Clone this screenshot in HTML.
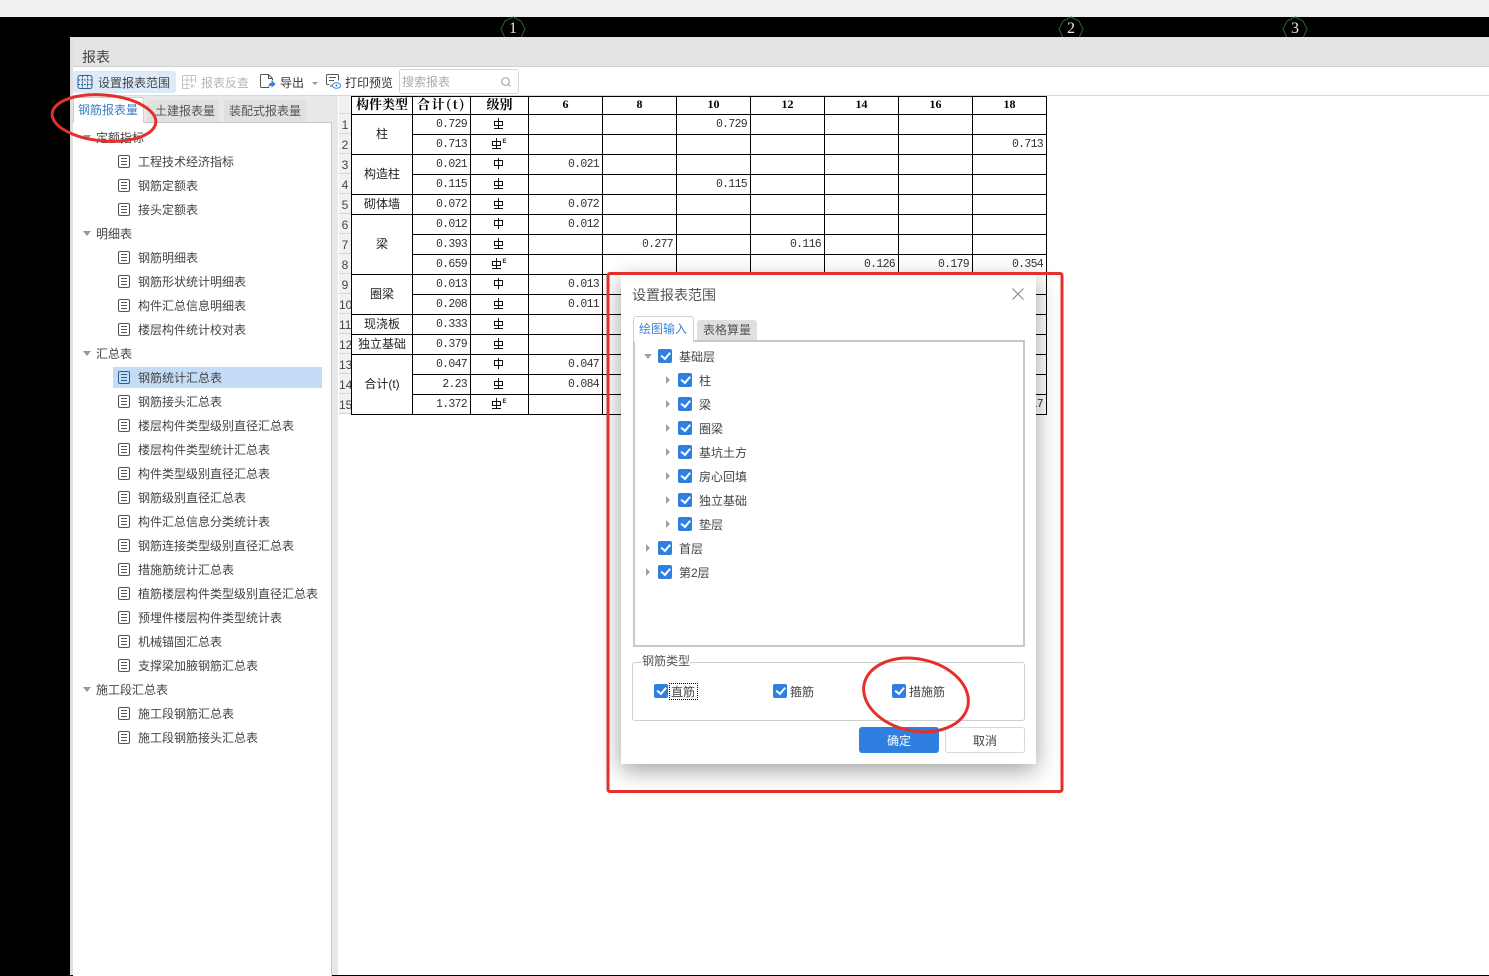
<!DOCTYPE html>
<html lang="zh">
<head>
<meta charset="utf-8">
<title>报表</title>
<style>
html,body{margin:0;padding:0}
body{width:1489px;height:975px;position:relative;overflow:hidden;background:#000;font-family:"Liberation Sans","Noto Sans CJK SC",sans-serif;font-size:12px;color:#444}
.a{position:absolute}
.t{position:absolute;white-space:nowrap;line-height:16px;margin-top:1px}
/* left tree */
#tree{position:absolute;left:73px;top:125px;width:258px}
.g,.i{height:24px;line-height:26px;position:relative;white-space:nowrap}
.g{padding-left:23px}
.g::before{content:"";position:absolute;left:10px;top:10px;border-left:4px solid transparent;border-right:4px solid transparent;border-top:5px solid #999}
.i{padding-left:65px}
.i::after{content:"";position:absolute;left:45px;top:6px;width:10px;height:11px;border:1px solid #555;border-radius:2px;background:linear-gradient(#555,#555) 2px 2px/6px 1px no-repeat,linear-gradient(#555,#555) 2px 5px/6px 1px no-repeat,linear-gradient(#555,#555) 2px 8px/6px 1px no-repeat}
.i span{position:relative;z-index:1}
.sel::before{content:"";position:absolute;left:40px;top:2px;width:209px;height:21px;background:#c5dcf7}
.sel::after{border-color:#2a5f96;background:linear-gradient(#2a5f96,#2a5f96) 2px 2px/6px 1px no-repeat,linear-gradient(#2a5f96,#2a5f96) 2px 5px/6px 1px no-repeat,linear-gradient(#2a5f96,#2a5f96) 2px 8px/6px 1px no-repeat;z-index:1}
/* table */
#tb{position:absolute;left:351px;top:96px;border-collapse:collapse;table-layout:fixed;background:#fff;color:#222}
#tb td{border:1px solid #000;padding:0;height:19px;box-sizing:content-box;line-height:14px;white-space:nowrap;overflow:hidden}
#tb tr.h td{height:17px;text-align:center;vertical-align:top;font:bold 12px/14px "Liberation Serif","Noto Serif CJK SC",serif;color:#000}
#tb tr.h td.c{font:bold 13px/14px "Noto Serif CJK SC","Liberation Serif",serif}
#tb td.n{text-align:right;padding-right:3px;font:11.5px/14px "Liberation Mono",monospace;letter-spacing:-.7px;vertical-align:top;padding-top:3px;height:16px;color:#333}
#tb td.m{text-align:center;font-size:12px;padding-bottom:2px;height:17px}
#tb td.s{text-align:center;line-height:14px;height:19px;padding:0}
.sup{font:bold 6px "Liberation Sans",sans-serif;vertical-align:4px;margin-left:-1px;line-height:0;position:relative;top:-2px}
svg.r{vertical-align:-2px;position:relative;top:-2px;left:-1px}
.rn{position:absolute;left:339px;width:12px;height:19px;border-bottom:1px solid #d4d4d4;background:#f1f1f1;color:#444;font-size:12px;line-height:22px;text-align:center;overflow:hidden}
/* dialog */
.cb{position:absolute;width:14px;height:14px;background:#2f7fe0;border-radius:2px}
.cb::after{content:"";position:absolute;left:3px;top:2.5px;width:7px;height:3.5px;border-left:2px solid #fff;border-bottom:2px solid #fff;transform:rotate(-50deg);transform-origin:center}
.tri{position:absolute;border-top:4px solid transparent;border-bottom:4px solid transparent;border-left:4px solid #a0a0a0}
</style>
</head>
<body>
<div class="a" style="left:0;top:0;width:1489px;height:17px;background:#f0f0f0"></div>

<!-- axis markers -->
<svg class="a" style="left:495px;top:12px" width="36" height="30"><polygon points="18,5 26,9 30,17 26,26 10,26 6,17 10,9" fill="none" stroke="#1d6b2c" stroke-width="1"/></svg>
<svg class="a" style="left:1053px;top:12px" width="36" height="30"><polygon points="18,5 26,9 30,17 26,26 10,26 6,17 10,9" fill="none" stroke="#1d6b2c" stroke-width="1"/></svg>
<svg class="a" style="left:1277px;top:12px" width="36" height="30"><polygon points="18,5 26,9 30,17 26,26 10,26 6,17 10,9" fill="none" stroke="#1d6b2c" stroke-width="1"/></svg>
<div class="t" style="left:509px;top:20px;color:#e8e8e8;font:16px/16px 'Liberation Serif',serif">1</div>
<div class="t" style="left:1067px;top:20px;color:#e8e8e8;font:16px/16px 'Liberation Serif',serif">2</div>
<div class="t" style="left:1291px;top:20px;color:#e8e8e8;font:16px/16px 'Liberation Serif',serif">3</div>

<!-- window -->
<div class="a" style="left:70px;top:37px;width:1419px;height:938px;background:#fff"></div>
<div class="a" style="left:70px;top:37px;width:1419px;height:29px;background:#e4e4e4;border-bottom:1px solid #d0d0d0"></div>
<div class="t" style="left:82px;top:48px;font-size:14px;color:#444">报表</div>
<div class="a" style="left:70px;top:37px;width:3px;height:938px;background:#e0e0e0"></div>

<!-- toolbar -->
<div class="a" style="left:73px;top:71px;width:103px;height:22px;background:#dceafa;border-radius:3px"></div>
<svg class="a" style="left:77px;top:74px" width="16" height="16" fill="none" stroke="#2f5f8f" stroke-width="1"><rect x="1" y="1.500" width="14" height="13" rx="2"/><path d="M1 6h14M1 10.500h14" stroke-dasharray="2 1"/><path d="M5.500 1.500v13M10.500 1.500v13" stroke-dasharray="2 1"/></svg>
<div class="t" style="left:98px;top:74px;color:#444">设置报表范围</div>
<svg class="a" style="left:181px;top:74px" width="16" height="16" fill="none" stroke="#c4c4c4"><path d="M1.500 1.500h13v7M1.500 1.500v13h7M6 1.500v13M10.500 1.500v7M1.500 6h13M1.500 10.500h7"/><path d="M11 10v4M9 12h5"/></svg>
<div class="t" style="left:201px;top:74px;color:#b5b5b5">报表反查</div>
<svg class="a" style="left:259px;top:73px" width="17" height="17" fill="none" stroke="#555"><path d="M10 14.500H2.500a1 1 0 0 1-1-1v-11a1 1 0 0 1 1-1h7l4 4v2"/><path d="M9.500 1.500v4h4"/><path d="M10 13c.5-2 1.500-3 3-3v-1.500l3 2.500-3 2.500V12c-1 0-2 .3-3 1z" fill="#2f7fe0" stroke="#2f7fe0"/></svg>
<div class="t" style="left:280px;top:74px;color:#333">导出</div>
<div class="a" style="left:312px;top:82px;border-left:3px solid transparent;border-right:3px solid transparent;border-top:3px solid #999"></div>
<svg class="a" style="left:325px;top:73px" width="17" height="17" fill="none" stroke="#555"><path d="M4 11.500H2.500a1 1 0 0 1-1-1v-8a1 1 0 0 1 1-1h10a1 1 0 0 1 1 1v5M4 4.500h7M4 7.500h5"/><path d="M6 11.500V14"/><ellipse cx="11.500" cy="12.500" rx="4" ry="2.800" stroke="#2f7fe0"/><circle cx="11.500" cy="12.500" r="1" fill="#2f7fe0" stroke="none"/></svg>
<div class="t" style="left:345px;top:74px;color:#333">打印预览</div>
<div class="a" style="left:399px;top:69px;width:118px;height:23px;border:1px solid #d6d6d6;border-radius:3px;background:#fff"></div>
<div class="t" style="left:402px;top:73px;color:#aaa">搜索报表</div>
<svg class="a" style="left:500px;top:76px" width="12" height="12" fill="none" stroke="#aaa" stroke-width="1.200"><circle cx="5.500" cy="5.500" r="3.800"/><path d="M8.500 8.500l2 2"/></svg>
<div class="a" style="left:73px;top:95px;width:1416px;height:1px;background:#d8d8d8"></div>

<!-- left panel -->
<div class="a" style="left:73px;top:96px;width:265px;height:879px;background:#e8e8e8"></div>
<div class="a" style="left:73px;top:122px;width:258px;height:853px;background:#fff;border-right:1px solid #c8c8c8;border-top:1px solid #c8c8c8"></div>
<div class="a" style="left:73px;top:97px;width:71px;height:26px;background:#fff;border:1px solid #d0d0d0;border-bottom:0;border-radius:3px 3px 0 0;box-sizing:border-box"></div>
<div class="t" style="left:78px;top:101px;color:#3b7fc4">钢筋报表量</div>
<div class="a" style="left:147px;top:100px;width:72px;height:22px;background:#e0e0e0;border-radius:3px 3px 0 0"></div>
<div class="t" style="left:155px;top:102px;color:#555">土建报表量</div>
<div class="a" style="left:224px;top:100px;width:82px;height:22px;background:#e0e0e0;border-radius:3px 3px 0 0"></div>
<div class="t" style="left:229px;top:102px;color:#555">装配式报表量</div>

<div id="tree">
<div class="g">定额指标</div>
<div class="i"><span>工程技术经济指标</span></div>
<div class="i"><span>钢筋定额表</span></div>
<div class="i"><span>接头定额表</span></div>
<div class="g">明细表</div>
<div class="i"><span>钢筋明细表</span></div>
<div class="i"><span>钢筋形状统计明细表</span></div>
<div class="i"><span>构件汇总信息明细表</span></div>
<div class="i"><span>楼层构件统计校对表</span></div>
<div class="g">汇总表</div>
<div class="i sel"><span>钢筋统计汇总表</span></div>
<div class="i"><span>钢筋接头汇总表</span></div>
<div class="i"><span>楼层构件类型级别直径汇总表</span></div>
<div class="i"><span>楼层构件类型统计汇总表</span></div>
<div class="i"><span>构件类型级别直径汇总表</span></div>
<div class="i"><span>钢筋级别直径汇总表</span></div>
<div class="i"><span>构件汇总信息分类统计表</span></div>
<div class="i"><span>钢筋连接类型级别直径汇总表</span></div>
<div class="i"><span>措施筋统计汇总表</span></div>
<div class="i"><span>植筋楼层构件类型级别直径汇总表</span></div>
<div class="i"><span>预埋件楼层构件类型统计表</span></div>
<div class="i"><span>机械锚固汇总表</span></div>
<div class="i"><span>支撑梁加腋钢筋汇总表</span></div>
<div class="g">施工段汇总表</div>
<div class="i"><span>施工段钢筋汇总表</span></div>
<div class="i"><span>施工段钢筋接头汇总表</span></div>
</div>

<!-- row numbers -->
<div class="rn" style="top:96px;height:17px"></div>
<div class="rn" style="top:114px">1</div>
<div class="rn" style="top:134px">2</div>
<div class="rn" style="top:154px">3</div>
<div class="rn" style="top:174px">4</div>
<div class="rn" style="top:194px">5</div>
<div class="rn" style="top:214px">6</div>
<div class="rn" style="top:234px">7</div>
<div class="rn" style="top:254px">8</div>
<div class="rn" style="top:274px">9</div>
<div class="rn" style="top:294px">10</div>
<div class="rn" style="top:314px">11</div>
<div class="rn" style="top:334px">12</div>
<div class="rn" style="top:354px">13</div>
<div class="rn" style="top:374px">14</div>
<div class="rn" style="top:394px">15</div>

<!-- report table -->
<table id="tb">
<colgroup><col style="width:61px"><col style="width:58px"><col style="width:58px"><col style="width:74px"><col style="width:74px"><col style="width:74px"><col style="width:74px"><col style="width:74px"><col style="width:74px"><col style="width:74px"></colgroup>
<tr class="h"><td class="c">构件类型</td><td class="c" style="letter-spacing:1.500px">合计(t)</td><td class="c">级别</td><td>6</td><td>8</td><td>10</td><td>12</td><td>14</td><td>16</td><td>18</td></tr>
<tr><td class="m" rowspan="2">柱</td><td class="n">0.729</td><td class="s"><svg class="r" width="11" height="11" fill="none" stroke="#111"><path d="M1.500 3.500h8v4h-8zM5.500 0v10M1 10.500h9"/></svg></td><td></td><td></td><td class="n">0.729</td><td></td><td></td><td></td><td></td></tr>
<tr><td class="n">0.713</td><td class="s"><svg class="r" width="11" height="11" fill="none" stroke="#111"><path d="M1.500 3.500h8v4h-8zM5.500 0v10M1 10.500h9"/></svg><span class="sup">E</span></td><td></td><td></td><td></td><td></td><td></td><td></td><td class="n">0.713</td></tr>
<tr><td class="m" rowspan="2">构造柱</td><td class="n">0.021</td><td class="s"><svg class="r" width="11" height="11" fill="none" stroke="#111"><path d="M1.500 2.500h8v5h-8zM5.500 0v11"/></svg></td><td class="n">0.021</td><td></td><td></td><td></td><td></td><td></td><td></td></tr>
<tr><td class="n">0.115</td><td class="s"><svg class="r" width="11" height="11" fill="none" stroke="#111"><path d="M1.500 3.500h8v4h-8zM5.500 0v10M1 10.500h9"/></svg></td><td></td><td></td><td class="n">0.115</td><td></td><td></td><td></td><td></td></tr>
<tr><td class="m">砌体墙</td><td class="n">0.072</td><td class="s"><svg class="r" width="11" height="11" fill="none" stroke="#111"><path d="M1.500 3.500h8v4h-8zM5.500 0v10M1 10.500h9"/></svg></td><td class="n">0.072</td><td></td><td></td><td></td><td></td><td></td><td></td></tr>
<tr><td class="m" rowspan="3">梁</td><td class="n">0.012</td><td class="s"><svg class="r" width="11" height="11" fill="none" stroke="#111"><path d="M1.500 2.500h8v5h-8zM5.500 0v11"/></svg></td><td class="n">0.012</td><td></td><td></td><td></td><td></td><td></td><td></td></tr>
<tr><td class="n">0.393</td><td class="s"><svg class="r" width="11" height="11" fill="none" stroke="#111"><path d="M1.500 3.500h8v4h-8zM5.500 0v10M1 10.500h9"/></svg></td><td></td><td class="n">0.277</td><td></td><td class="n">0.116</td><td></td><td></td><td></td></tr>
<tr><td class="n">0.659</td><td class="s"><svg class="r" width="11" height="11" fill="none" stroke="#111"><path d="M1.500 3.500h8v4h-8zM5.500 0v10M1 10.500h9"/></svg><span class="sup">E</span></td><td></td><td></td><td></td><td></td><td class="n">0.126</td><td class="n">0.179</td><td class="n">0.354</td></tr>
<tr><td class="m" rowspan="2">圈梁</td><td class="n">0.013</td><td class="s"><svg class="r" width="11" height="11" fill="none" stroke="#111"><path d="M1.500 2.500h8v5h-8zM5.500 0v11"/></svg></td><td class="n">0.013</td><td></td><td></td><td></td><td></td><td></td><td></td></tr>
<tr><td class="n">0.208</td><td class="s"><svg class="r" width="11" height="11" fill="none" stroke="#111"><path d="M1.500 3.500h8v4h-8zM5.500 0v10M1 10.500h9"/></svg></td><td class="n">0.011</td><td></td><td></td><td></td><td></td><td></td><td></td></tr>
<tr><td class="m">现浇板</td><td class="n">0.333</td><td class="s"><svg class="r" width="11" height="11" fill="none" stroke="#111"><path d="M1.500 3.500h8v4h-8zM5.500 0v10M1 10.500h9"/></svg></td><td></td><td></td><td></td><td></td><td></td><td></td><td></td></tr>
<tr><td class="m">独立基础</td><td class="n">0.379</td><td class="s"><svg class="r" width="11" height="11" fill="none" stroke="#111"><path d="M1.500 3.500h8v4h-8zM5.500 0v10M1 10.500h9"/></svg></td><td></td><td></td><td></td><td></td><td></td><td></td><td></td></tr>
<tr><td class="m" rowspan="3">合计(t)</td><td class="n">0.047</td><td class="s"><svg class="r" width="11" height="11" fill="none" stroke="#111"><path d="M1.500 2.500h8v5h-8zM5.500 0v11"/></svg></td><td class="n">0.047</td><td></td><td></td><td></td><td></td><td></td><td></td></tr>
<tr><td class="n">2.23</td><td class="s"><svg class="r" width="11" height="11" fill="none" stroke="#111"><path d="M1.500 3.500h8v4h-8zM5.500 0v10M1 10.500h9"/></svg></td><td class="n">0.084</td><td></td><td></td><td></td><td></td><td></td><td></td></tr>
<tr><td class="n">1.372</td><td class="s"><svg class="r" width="11" height="11" fill="none" stroke="#111"><path d="M1.500 3.500h8v4h-8zM5.500 0v10M1 10.500h9"/></svg><span class="sup">E</span></td><td></td><td></td><td></td><td></td><td></td><td></td><td class="n">0.117</td></tr>
</table>

<!-- dialog -->
<div class="a" style="left:621px;top:275px;width:415px;height:489px;background:#fff;box-shadow:0 6px 22px rgba(0,0,0,.38)"></div>
<div class="t" style="left:632px;top:286px;font-size:14px;color:#555">设置报表范围</div>
<svg class="a" style="left:1012px;top:288px" width="12" height="12" stroke="#888" fill="none"><path d="M.5.500l11 11M11.500.500l-11 11"/></svg>
<div class="a" style="left:633px;top:340px;width:392px;height:307px;border:2px solid #c8c8c8;box-sizing:border-box"></div>
<div class="a" style="left:633px;top:316px;width:61px;height:26px;background:#fff;border:1px solid #d0d0d0;border-bottom:0;border-radius:3px 3px 0 0;box-sizing:border-box"></div>
<div class="t" style="left:639px;top:320px;color:#3b86d8">绘图输入</div>
<div class="a" style="left:697px;top:320px;width:60px;height:20px;background:#e0e0e0;border-radius:3px 3px 0 0"></div>
<div class="t" style="left:703px;top:321px;color:#555">表格算量</div>

<div class="a" style="left:644px;top:354px;border-left:4px solid transparent;border-right:4px solid transparent;border-top:5px solid #a0a0a0"></div>
<div class="cb" style="left:658px;top:349px"></div>
<div class="t" style="left:679px;top:348px">基础层</div>

<div class="tri" style="left:666px;top:376px"></div><div class="cb" style="left:678px;top:373px"></div><div class="t" style="left:699px;top:372px">柱</div>
<div class="tri" style="left:666px;top:400px"></div><div class="cb" style="left:678px;top:397px"></div><div class="t" style="left:699px;top:396px">梁</div>
<div class="tri" style="left:666px;top:424px"></div><div class="cb" style="left:678px;top:421px"></div><div class="t" style="left:699px;top:420px">圈梁</div>
<div class="tri" style="left:666px;top:448px"></div><div class="cb" style="left:678px;top:445px"></div><div class="t" style="left:699px;top:444px">基坑土方</div>
<div class="tri" style="left:666px;top:472px"></div><div class="cb" style="left:678px;top:469px"></div><div class="t" style="left:699px;top:468px">房心回填</div>
<div class="tri" style="left:666px;top:496px"></div><div class="cb" style="left:678px;top:493px"></div><div class="t" style="left:699px;top:492px">独立基础</div>
<div class="tri" style="left:666px;top:520px"></div><div class="cb" style="left:678px;top:517px"></div><div class="t" style="left:699px;top:516px">垫层</div>
<div class="tri" style="left:646px;top:544px"></div><div class="cb" style="left:658px;top:541px"></div><div class="t" style="left:679px;top:540px">首层</div>
<div class="tri" style="left:646px;top:568px"></div><div class="cb" style="left:658px;top:565px"></div><div class="t" style="left:679px;top:564px">第2层</div>

<div class="a" style="left:632px;top:662px;width:393px;height:59px;border:1px solid #cfcfcf;border-radius:3px;box-sizing:border-box"></div>
<div class="t" style="left:642px;top:653px;background:#fff;color:#555;line-height:15px">钢筋类型</div>
<div class="cb" style="left:654px;top:684px"></div>
<div class="t" style="left:669px;top:682px;height:15px;border:1px dotted #000;line-height:16px;padding-left:1px;box-sizing:content-box;width:26px">直筋</div>
<div class="cb" style="left:773px;top:684px"></div>
<div class="t" style="left:790px;top:683px">箍筋</div>
<div class="cb" style="left:892px;top:684px"></div>
<div class="t" style="left:909px;top:683px">措施筋</div>

<div class="a" style="left:859px;top:727px;width:80px;height:26px;background:#2f7fe0;border-radius:3px;color:#fff;text-align:center;line-height:29px">确定</div>
<div class="a" style="left:945px;top:727px;width:80px;height:26px;border:1px solid #d8d8d8;border-radius:3px;box-sizing:border-box;background:#fff;color:#444;text-align:center;line-height:27px">取消</div>

<!-- red annotations -->
<svg class="a" style="left:0;top:0;pointer-events:none" width="1489" height="975" fill="none" stroke="#e4302a">
<rect x="608" y="273.500" width="454" height="518" rx="2" stroke-width="3"/>
<ellipse cx="104" cy="118" rx="52" ry="23" stroke-width="3" transform="rotate(5 104 118)"/>
<ellipse cx="916" cy="695" rx="53" ry="36" stroke-width="3" transform="rotate(12 916 695)"/>
</svg>
</body>
</html>
